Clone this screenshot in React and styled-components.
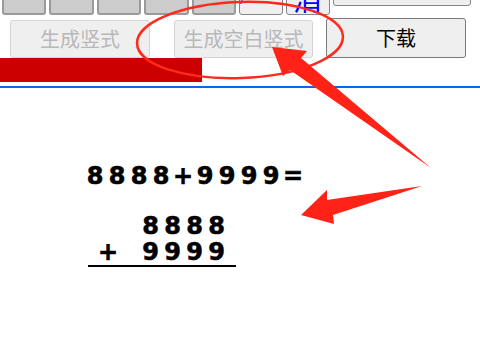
import React from "react";
import styled, { createGlobalStyle } from "styled-components";

const GlobalStyle = createGlobalStyle`
  html, body {
    margin: 0;
    padding: 0;
    background: #fff;
    overflow: hidden;
  }
  body {
    font-family: "Noto Sans CJK SC", "Liberation Sans", sans-serif;
  }
`;

const Page = styled.div`
  position: relative;
  width: 480px;
  height: 359px;
  overflow: hidden;
`;

const KeyRow = styled.div`
  display: flex;
  align-items: flex-start;
  gap: 3px;
  margin-top: -25px;
  padding-left: 2px;
`;

const Key = styled.div`
  box-sizing: border-box;
  width: ${(p) => p.$w || 44}px;
  height: ${(p) => p.$h || 40}px;
  display: flex;
  align-items: flex-end;
  justify-content: ${(p) => p.$jc || "center"};
  overflow: hidden;
  border-radius: 3px;
  background: ${(p) => (p.$gray ? "#cccccc" : "#efefef")};
  border: ${(p) => (p.$gray ? "2px solid #9a9a9a" : "1px solid #858585")};
  color: #0000ff;
  font-size: ${(p) => p.$fs || 20}px;
  line-height: 1;
  padding-bottom: ${(p) => p.$pb || 0}px;
`;

const ButtonRow = styled.div`
  display: flex;
  align-items: flex-end;
  height: 40px;
  margin-top: 3px;
  padding-left: 10px;
`;

const Button = styled.button`
  box-sizing: border-box;
  width: ${(p) => p.$w}px;
  height: ${(p) => (p.disabled ? 38 : 40)}px;
  margin-right: ${(p) => p.$mr || 0}px;
  padding: 0;
  border-radius: 3px;
  background: #efefef;
  border: 1px solid ${(p) => (p.disabled ? "#d4d4d4" : "#7a7a7a")};
  color: ${(p) => (p.disabled ? "#b8b8b8" : "#000")};
  font-family: "Noto Sans CJK SC", sans-serif;
  font-size: 20px;
  line-height: 1;
`;

const RedBar = styled.div`
  width: 202px;
  height: 24px;
  background: #cc0000;
`;

const BlueRule = styled.div`
  height: 2px;
  margin-top: 4px;
  background: #0a66ee;
`;

const Content = styled.div`
  padding-left: 84px;
  font-family: "DejaVu Sans", sans-serif;
  font-weight: bold;
  font-size: 24px;
  color: #000;
  -webkit-text-stroke: 0.6px #000;
`;

const Line = styled.div`
  display: flex;
  height: ${(p) => p.$lh || 24}px;
  line-height: ${(p) => p.$lh || 24}px;
  margin-top: ${(p) => p.$mt || 0}px;
`;

const Char = styled.span`
  display: inline-block;
  width: 22px;
  text-align: center;
`;

const Vertical = styled.div`
  width: 148px;
  margin-left: 4px;
  margin-top: 25px;
  border-bottom: 2px solid #000;
`;

const OpCell = styled.span`
  display: inline-block;
  box-sizing: border-box;
  width: 51.5px;
  padding-left: 10px;
`;

const Overlay = styled.svg`
  position: absolute;
  left: 0;
  top: 0;
  pointer-events: none;
`;

const chars = (s) => s.split("").map((c, i) => <Char key={i}>{c}</Char>);

export default function App() {
  return (
    <Page>
      <GlobalStyle />
      <KeyRow>
        <Key $gray $w={44} $pb={12} $fs={16}>÷</Key>
        <Key $gray $w={45} />
        <Key $gray $w={44} />
        <Key $gray $w={45} />
        <Key $gray $w={44} />
        <Key $w={44} $pb={12} $fs={16} $jc="flex-start">/</Key>
        <Key $w={44} $fs={30} $pb={2}>清</Key>
        <Key $w={138} $h={31} />
      </KeyRow>
      <ButtonRow>
        <Button disabled $w={140} $mr={24}>生成竖式</Button>
        <Button disabled $w={139} $mr={13}>生成空白竖式</Button>
        <Button $w={140}>下载</Button>
      </ButtonRow>
      <RedBar />
      <BlueRule />
      <Content>
        <Line $mt={76}>{chars("8888+9999=")}</Line>
        <Vertical>
          <Line $lh={26}>
            <OpCell />
            {chars("8888")}
          </Line>
          <Line $lh={26}>
            <OpCell>+</OpCell>
            {chars("9999")}
          </Line>
        </Vertical>
      </Content>
      <Overlay width="480" height="359" viewBox="0 0 480 359">
        <ellipse
          cx="240"
          cy="40"
          rx="103"
          ry="38"
          fill="none"
          stroke="#ff2a1a"
          strokeWidth="2.5"
          transform="rotate(-2 240 40)"
        />
        <polygon
          points="272,47 307,51 301,58 431,168 290,70 283,76"
          fill="#ff2216"
        />
        <polygon
          points="301,215 327,190 327,200 422,186 333,215 334,224"
          fill="#ff2216"
        />
      </Overlay>
    </Page>
  );
}
